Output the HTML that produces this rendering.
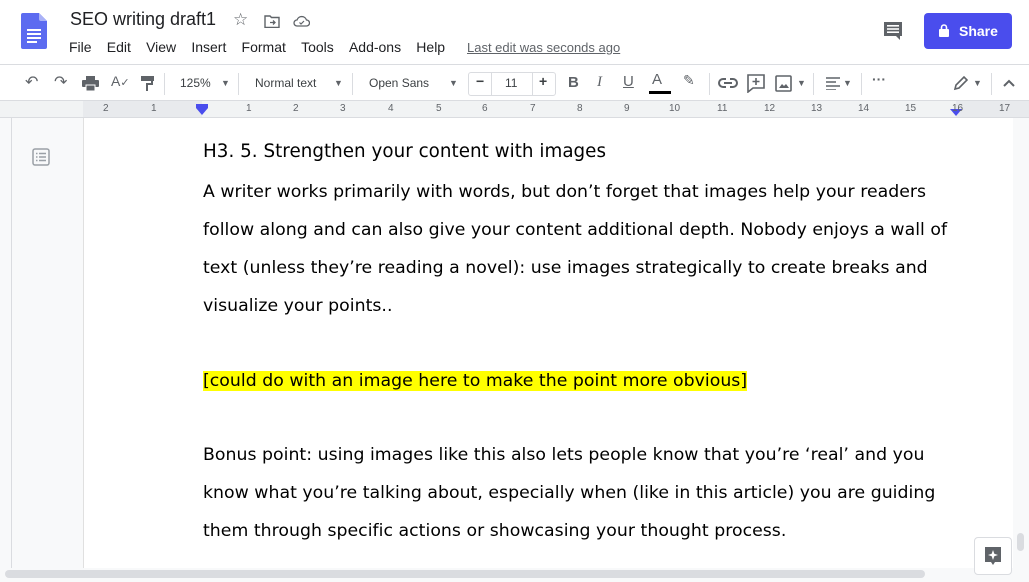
<!DOCTYPE html>
<html><head><meta charset="utf-8"><style>
*{margin:0;padding:0;box-sizing:border-box}
body{width:1029px;height:582px;overflow:hidden;background:#f8f9fa;font-family:"Liberation Sans",Arial,sans-serif;position:relative;color:#202124}
.abs{position:absolute}
#hdr{left:0;top:0;width:1029px;height:64px;background:#fff}
.menu span{margin-right:15.2px;font-size:14px;color:#202124}
#tb{left:0;top:64px;width:1029px;height:37px;background:#fff;border-top:1px solid #dadce0;border-bottom:1px solid #dadce0}
.tt{position:absolute;top:11px;font-size:12px;color:#3c4043}
.sep{position:absolute;top:8px;width:1px;height:22px;background:#dadce0}
#ruler{left:0;top:101px;width:1029px;height:17px;background:#f1f3f4;border-bottom:1px solid #dadce0}
#page{left:83px;top:118px;width:930px;height:452px;background:#fff;border-left:1px solid #e0e0e0}
.ln{position:absolute;left:203px;white-space:nowrap;font-family:"DejaVu Sans",sans-serif;font-size:17.3px;color:#000;letter-spacing:0.03px}
.rn{position:absolute;font-size:10px;color:#5f6368;top:103px}
</style></head><body>
<div id="hdr" class="abs">
  <svg class="abs" style="left:21px;top:13px" width="26" height="36" viewBox="0 0 26 36"><path d="M2 0h16l8 8v26a2 2 0 0 1-2 2H2a2 2 0 0 1-2-2V2a2 2 0 0 1 2-2z" fill="#5c6bf0"/><path d="M18 0l8 8h-6a2 2 0 0 1-2-2z" fill="#aab2f7"/><rect x="6" y="16" width="14" height="2" fill="#fff"/><rect x="6" y="20" width="14" height="2" fill="#fff"/><rect x="6" y="24" width="14" height="2" fill="#fff"/><rect x="6" y="28" width="10" height="2" fill="#fff"/></svg>
  <div class="abs" style="left:70px;top:9px;font-size:18px;color:#202124">SEO writing draft1</div>
  <div class="abs" style="left:233px;top:10px;font-size:17px;color:#5f6368">☆</div>
  <svg class="abs" style="left:264px;top:15px" width="16" height="13" viewBox="0 0 16 13"><path d="M1 1h5l1.5 1.5H15v10H1z" fill="none" stroke="#5f6368" stroke-width="1.4"/><path d="M6 7.5h5M9 5.5l2 2-2 2" fill="none" stroke="#5f6368" stroke-width="1.3"/></svg>
  <svg class="abs" style="left:293px;top:15px" width="17" height="12" viewBox="0 0 17 12"><path d="M4 11a3 3 0 0 1 0-6 5 5 0 0 1 9.5 0 3 3 0 0 1 0 6z" fill="none" stroke="#5f6368" stroke-width="1.3"/><path d="M6.5 7.5l1.5 1.5 3-3" fill="none" stroke="#5f6368" stroke-width="1.2"/></svg>
  <div class="abs menu" style="left:69px;top:39px"><span>File</span><span>Edit</span><span>View</span><span>Insert</span><span>Format</span><span>Tools</span><span>Add-ons</span><span>Help</span></div>
  <div class="abs" style="left:467px;top:40px;font-size:13px;color:#5f6368;text-decoration:underline">Last edit was seconds ago</div>
  <svg class="abs" style="left:883px;top:21px" width="20" height="20" viewBox="0 0 20 20"><path d="M1 1h18v14h-2v4l-4-4H1z" fill="#5f6368"/><rect x="4" y="4" width="12" height="1.6" fill="#fff"/><rect x="4" y="7.2" width="12" height="1.6" fill="#fff"/><rect x="4" y="10.4" width="12" height="1.6" fill="#fff"/></svg>
  <div class="abs" style="left:924px;top:13px;width:88px;height:36px;background:#4a4ded;border-radius:4px;color:#fff;font-size:14px;font-weight:bold;line-height:36px;padding-left:35px">Share</div>
  <svg class="abs" style="left:939px;top:24px" width="10" height="13" viewBox="0 0 10 13"><rect x="0" y="5" width="10" height="8" rx="1" fill="#fff"/><path d="M2.5 5V3.5a2.5 2.5 0 0 1 5 0V5" fill="none" stroke="#fff" stroke-width="1.6"/></svg>
</div>
<div id="tb" class="abs">
  <div class="tt" style="left:25px;font-size:16px;top:7px;color:#5f6368">↶</div>
  <div class="tt" style="left:54px;font-size:16px;top:7px;color:#5f6368">↷</div>
  <svg class="abs" style="left:82px;top:11px" width="17" height="15" viewBox="0 0 17 15"><rect x="4" y="0" width="9" height="4" fill="#5f6368"/><rect x="0" y="4" width="17" height="7" rx="1" fill="#5f6368"/><rect x="4" y="9" width="9" height="6" fill="#5f6368" stroke="#fff" stroke-width="1"/></svg>
  <div class="tt" style="left:111px;top:8px;font-size:14px;color:#5f6368">A<span style="font-size:11px">✓</span></div>
  <svg class="abs" style="left:141px;top:11px" width="13" height="15" viewBox="0 0 13 15"><rect x="0" y="0" width="13" height="5" fill="#5f6368"/><path d="M11 5v3H6v7" fill="none" stroke="#5f6368" stroke-width="2"/></svg>
  <div class="sep" style="left:164px"></div>
  <div class="tt" style="left:180px">125%</div><div class="tt" style="left:221px;font-size:9px;top:13px;color:#5f6368">▼</div>
  <div class="sep" style="left:238px"></div>
  <div class="tt" style="left:255px">Normal text</div><div class="tt" style="left:334px;font-size:9px;top:13px;color:#5f6368">▼</div>
  <div class="sep" style="left:352px"></div>
  <div class="tt" style="left:369px">Open Sans</div><div class="tt" style="left:449px;font-size:9px;top:13px;color:#5f6368">▼</div>
  <div class="abs" style="left:468px;top:7px;width:88px;height:24px;border:1px solid #dadce0;border-radius:3px"></div>
  <div class="abs" style="left:491px;top:7px;width:1px;height:24px;background:#dadce0"></div>
  <div class="abs" style="left:532px;top:7px;width:1px;height:24px;background:#dadce0"></div>
  <div class="tt" style="left:476px;font-weight:bold;font-size:14px;top:8px">−</div>
  <div class="tt" style="left:505px">11</div>
  <div class="tt" style="left:539px;font-weight:bold;font-size:14px;top:8px">+</div>
  <div class="tt" style="left:568px;font-weight:bold;font-size:15px;top:9px;color:#5f6368">B</div>
  <div class="tt" style="left:597px;font-style:italic;font-size:15px;top:9px;color:#5f6368;font-family:'Liberation Serif',serif">I</div>
  <div class="tt" style="left:623px;text-decoration:underline;font-size:15px;top:8px;color:#5f6368">U</div>
  <div class="tt" style="left:652px;font-size:15px;top:6px;color:#5f6368">A</div>
  <div class="abs" style="left:649px;top:26px;width:22px;height:3px;background:#000"></div>
  <div class="tt" style="left:683px;font-size:14px;top:7px;color:#5f6368">✎</div>
  <div class="sep" style="left:709px"></div>
  <svg class="abs" style="left:718px;top:13px" width="20" height="10" viewBox="0 0 20 10"><path d="M8 1H5a4 4 0 0 0 0 8h3M12 1h3a4 4 0 0 1 0 8h-3M6 5h8" fill="none" stroke="#5f6368" stroke-width="2"/></svg>
  <svg class="abs" style="left:747px;top:9px" width="18" height="19" viewBox="0 0 18 19"><path d="M1 1h16v13H6l-5 4z" fill="none" stroke="#5f6368" stroke-width="1.6"/><path d="M9 4v7M5.5 7.5h7" stroke="#5f6368" stroke-width="1.6"/></svg>
  <svg class="abs" style="left:775px;top:10px" width="17" height="17" viewBox="0 0 17 17"><rect x="1" y="1" width="15" height="15" rx="1" fill="none" stroke="#5f6368" stroke-width="1.6"/><path d="M4 13l3-4 2 2 2-2 3 4z" fill="#5f6368"/></svg>
  <div class="tt" style="left:797px;font-size:9px;top:13px;color:#5f6368">▼</div>
  <div class="sep" style="left:813px"></div>
  <svg class="abs" style="left:826px;top:12px" width="14" height="13" viewBox="0 0 14 13"><path d="M0 1h14M0 5h10M0 9h14M0 13h10" stroke="#5f6368" stroke-width="1.6"/></svg>
  <div class="tt" style="left:843px;font-size:9px;top:13px;color:#5f6368">▼</div>
  <div class="sep" style="left:861px"></div>
  <div class="tt" style="left:872px;font-size:14px;top:6px;color:#5f6368;font-weight:bold">···</div>
  <svg class="abs" style="left:953px;top:11px" width="15" height="15" viewBox="0 0 15 15"><path d="M2 13l1-4 8-8 3 3-8 8z" fill="none" stroke="#5f6368" stroke-width="1.6"/></svg>
  <div class="tt" style="left:973px;font-size:9px;top:13px;color:#5f6368">▼</div>
  <div class="sep" style="left:991px"></div>
  <svg class="abs" style="left:1003px;top:14px" width="12" height="8" viewBox="0 0 12 8"><path d="M1 7l5-5 5 5" fill="none" stroke="#5f6368" stroke-width="2"/></svg>
</div>
<div id="ruler" class="abs">
  <div class="abs" style="left:83px;top:0;width:119px;height:16px;background:#e8eaed"></div>
  <div class="abs" style="left:956px;top:0;width:73px;height:16px;background:#e8eaed"></div>
  <div class="abs" style="left:196px;top:3px;width:12px;height:4px;background:#4a4ded"></div>
  <svg class="abs" style="left:196px;top:7px" width="12" height="7"><path d="M0 0h12L6 7z" fill="#4a4ded"/></svg>
  <svg class="abs" style="left:950px;top:8px" width="12" height="7"><path d="M0 0h12L6 7z" fill="#4a4ded"/></svg>
</div>
<div class="rn" style="left:103px">2</div><div class="rn" style="left:151px">1</div>
<div class="rn" style="left:246px">1</div><div class="rn" style="left:293px">2</div><div class="rn" style="left:340px">3</div><div class="rn" style="left:388px">4</div><div class="rn" style="left:436px">5</div><div class="rn" style="left:482px">6</div><div class="rn" style="left:530px">7</div><div class="rn" style="left:577px">8</div><div class="rn" style="left:624px">9</div><div class="rn" style="left:669px">10</div><div class="rn" style="left:717px">11</div><div class="rn" style="left:764px">12</div><div class="rn" style="left:811px">13</div><div class="rn" style="left:858px">14</div><div class="rn" style="left:905px">15</div><div class="rn" style="left:952px">16</div><div class="rn" style="left:999px">17</div>
<div class="abs" style="left:11px;top:118px;width:1px;height:464px;background:#dadce0"></div>
<svg class="abs" style="left:32px;top:148px" width="18" height="18" viewBox="0 0 18 18"><rect x="1" y="1" width="16" height="16" rx="2" fill="none" stroke="#9aa0a6" stroke-width="1.5"/><path d="M4 5.5h1.5M7 5.5h7M4 9h1.5M7 9h7M4 12.5h1.5M7 12.5h7" stroke="#9aa0a6" stroke-width="1.5"/></svg>
<div id="page" class="abs"></div>
<div class="ln" style="top:141px;font-size:18.3px">H3. 5. Strengthen your content with images</div>
<div class="ln" style="top:182px">A writer works primarily with words, but don’t forget that images help your readers</div>
<div class="ln" style="top:220px">follow along and can also give your content additional depth. Nobody enjoys a wall of</div>
<div class="ln" style="top:258px">text (unless they’re reading a novel): use images strategically to create breaks and</div>
<div class="ln" style="top:296px">visualize your points..</div>
<div class="ln" style="top:371px"><span style="background:#ffff00">[could do with an image here to make the point more obvious]</span></div>
<div class="ln" style="top:445px">Bonus point: using images like this also lets people know that you’re ‘real’ and you</div>
<div class="ln" style="top:483px">know what you’re talking about, especially when (like in this article) you are guiding</div>
<div class="ln" style="top:521px">them through specific actions or showcasing your thought process.</div>
<div class="abs" style="left:1013px;top:118px;width:16px;height:464px;background:#f8f9fa"></div>
<div class="abs" style="left:1017px;top:533px;width:7px;height:18px;background:#dadce0;border-radius:4px"></div>
<div class="abs" style="left:0;top:568px;width:1013px;height:14px;background:#f8f9fa"></div>
<div class="abs" style="left:5px;top:570px;width:920px;height:8px;background:#dadce0;border-radius:4px"></div>
<div class="abs" style="left:974px;top:537px;width:38px;height:38px;background:#fff;border:1px solid #dadce0;border-radius:4px"></div>
<svg class="abs" style="left:984px;top:546px" width="18" height="20" viewBox="0 0 18 20"><path d="M1 1h16v15h-6l-2 3-2-3H1z" fill="#5f6368"/><path d="M9 4l1.3 3.7L14 9l-3.7 1.3L9 14l-1.3-3.7L4 9l3.7-1.3z" fill="#fff"/></svg>
</body></html>
